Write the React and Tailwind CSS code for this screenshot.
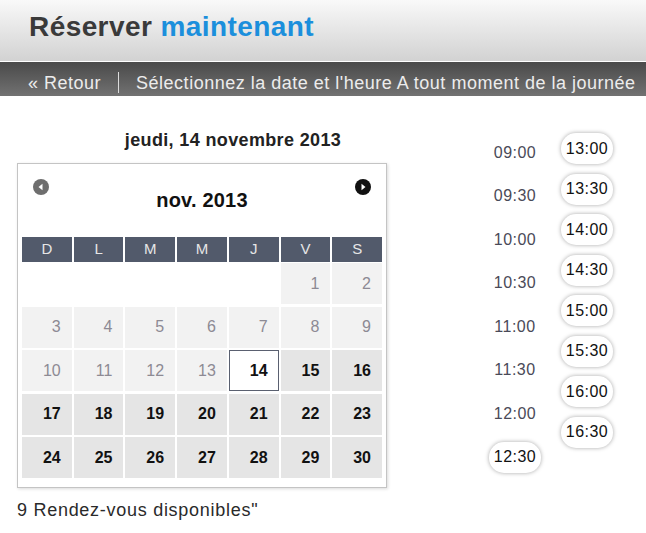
import React from "react";

const weekDays = ["D", "L", "M", "M", "J", "V", "S"];

// null = empty cell, past = not bookable, today = selected
const buildDays = () => {
  const cells = [null, null, null, null, null];
  for (let d = 1; d <= 30; d++) {
    cells.push({ day: d, past: d < 14, selected: d === 14 });
  }
  return cells;
};

const leftTimes = [
  { t: "09:00" },
  { t: "09:30" },
  { t: "10:00" },
  { t: "10:30" },
  { t: "11:00" },
  { t: "11:30" },
  { t: "12:00" },
  { t: "12:30", free: true },
];

const rightTimes = ["13:00", "13:30", "14:00", "14:30", "15:00", "15:30", "16:00", "16:30"];

const Arrow = ({ dir, color }) => (
  <svg width="16" height="16" viewBox="0 0 16 16">
    <circle cx="8" cy="8" r="8" fill={color} />
    {dir === "left" ? (
      <polygon points="5.5,8 9.5,4.8 9.5,11.2" fill="#fff" />
    ) : (
      <polygon points="10.5,8 6.5,4.8 6.5,11.2" fill="#fff" />
    )}
  </svg>
);

const Pill = ({ children }) => (
  <span className="h-[31px] w-[52px] flex items-center justify-center rounded-[15px] bg-white text-[#111] shadow-[0_0_4px_rgba(0,0,0,0.35)]">
    {children}
  </span>
);

const App = () => {
  const days = buildDays();

  return (
    <div className="w-[646px] h-[533px] bg-white font-['Liberation_Sans',Arial,sans-serif] overflow-hidden">
      <div className="h-[62px] bg-linear-to-b from-[#f9f9f9] to-[#d2d2d2] border-b border-white pl-[29px] pt-[11px]">
        <h1 className="text-[28px] leading-[32px] font-bold tracking-[0.015em] text-[#3a3a3a]">
          Réserver <span className="text-[#1b8fdc]">maintenant</span>
        </h1>
      </div>

      <div className="h-[34px] bg-linear-to-b from-[#4a4a4a] to-[#727272] flex items-start pl-[28px] pt-[9px] text-[18px] leading-[24px] tracking-[0.028em] text-[#ececec] whitespace-nowrap">
        <span>« Retour</span>
        <span className="w-px h-[21px] bg-[#dcdcdc] mx-[17px] mt-[1px]" />
        <span>Sélectionnez la date et l'heure A tout moment de la journée</span>
      </div>

      <div className="flex">
        <div className="ml-[17px] w-[370px]">
          <p className="pt-[32px] text-center text-[18px] leading-[24px] font-bold tracking-[0.02em] text-[#222] pl-[62px]">
            jeudi, 14 novembre 2013
          </p>

          <div className="mt-[11px] border border-[#c4c4c4] shadow-[1px_1px_3px_rgba(0,0,0,0.15)] bg-white px-[4px] pb-[9px]">
            <div className="h-[73px] flex items-start pt-[15px] px-[11px]">
              <Arrow dir="left" color="#6e6e6e" />
              <div className="flex-1 text-center mt-[9px] text-[20px] leading-[24px] font-bold tracking-[0.01em] text-[#111]">
                nov. 2013
              </div>
              <Arrow dir="right" color="#111" />
            </div>

            <div className="grid grid-cols-7 gap-x-[2px]">
              {weekDays.map((d, i) => (
                <div
                  key={i}
                  className="h-[25px] bg-[#525a6b] text-[#e6e6e6] text-[15px] flex items-center justify-center"
                >
                  {d}
                </div>
              ))}
            </div>

            <div className="grid grid-cols-7 gap-x-[2px] gap-y-[2.5px] mt-[1px]">
              {days.map((c, i) => {
                if (!c) return <div key={i} className="h-[41px]" />;
                if (c.selected)
                  return (
                    <div
                      key={i}
                      className="h-[41px] bg-white border-[1.5px] border-[#5a6070] flex items-center justify-end pr-[10px] text-[16px] font-bold text-[#111]"
                    >
                      {c.day}
                    </div>
                  );
                return (
                  <div
                    key={i}
                    className={
                      c.past
                        ? "h-[41px] bg-[#f2f2f2] flex items-center justify-end pr-[11px] text-[16px] text-[#8d8a94]"
                        : "h-[41px] bg-[#e5e5e5] flex items-center justify-end pr-[11px] text-[16px] font-bold text-[#111]"
                    }
                  >
                    {c.day}
                  </div>
                );
              })}
            </div>
          </div>

          <p className="mt-[10px] text-[18px] leading-[24px] tracking-[0.04em] text-[#2a2a2a] whitespace-nowrap">
            9 Rendez-vous disponibles"
          </p>
        </div>

        <div className="ml-[100px] flex gap-[16px] text-[16px] tracking-[0.03em]">
          <div className="w-[56px] pt-[35px] flex flex-col">
            {leftTimes.map((x) => (
              <div key={x.t} className="h-[43.5px] flex items-center justify-center">
                {x.free ? <Pill>{x.t}</Pill> : <span className="text-[#4a4a58]">{x.t}</span>}
              </div>
            ))}
          </div>
          <div className="w-[56px] pt-[37px] flex flex-col gap-[9.5px] items-center">
            {rightTimes.map((t) => (
              <Pill key={t}>{t}</Pill>
            ))}
          </div>
        </div>
      </div>
    </div>
  );
};

export default App;
